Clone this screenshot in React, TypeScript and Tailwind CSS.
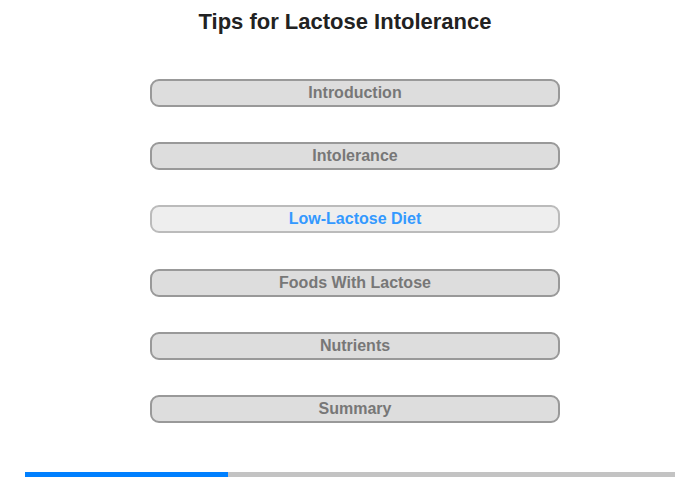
import React from "react";

const items = [
  "Introduction",
  "Intolerance",
  "Low-Lactose Diet",
  "Foods With Lactose",
  "Nutrients",
  "Summary",
];

export default function App() {
  return (
    <div
      className="w-[700px] h-[480px] bg-white relative overflow-hidden"
      style={{ fontFamily: '"Liberation Sans", Arial, sans-serif' }}
    >
      <div className="pr-[10px] pt-[9px] h-[79px]">
        <h1 className="text-[22px] leading-[26px] font-bold text-[#222222] text-center">
          Tips for Lactose Intolerance
        </h1>
      </div>
      <div className="flex flex-col gap-[35.2px] pl-[150px]">
        {items.map((t, i) => {
          const active = i === 2;
          return (
            <div
              key={t}
              className={
                active
                  ? "w-[410px] h-[28px] rounded-[9px] border-2 border-[#bbbbbb] bg-[#eeeeee] flex items-center justify-center text-[16px] font-bold text-[#3399ff]"
                  : "w-[410px] h-[28px] rounded-[9px] border-2 border-[#999999] bg-[#dddddd] flex items-center justify-center text-[16px] font-bold text-[#777777]"
              }
            >
              {t}
            </div>
          );
        })}
      </div>
      <div className="absolute left-[25px] top-[472px] w-[650px] h-[5px] bg-[#c3c3c3] flex">
        <div className="w-[203px] h-full bg-[#0080ff]" />
      </div>
    </div>
  );
}
